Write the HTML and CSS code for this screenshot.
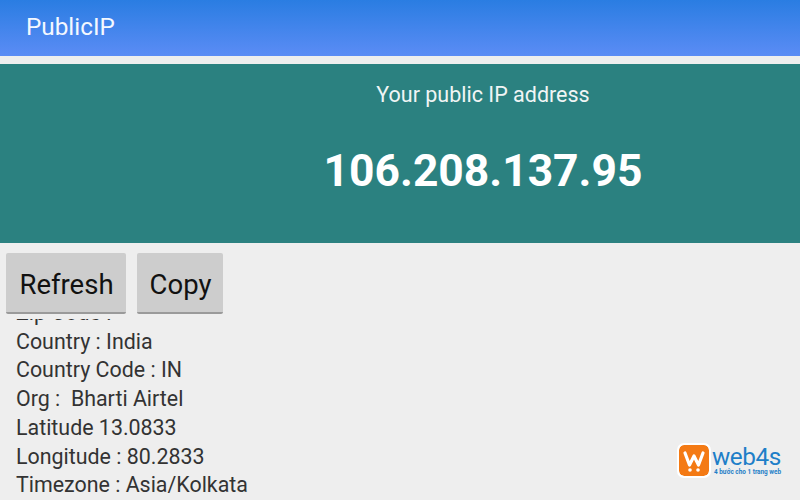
FILE: index.html
```html
<!DOCTYPE html>
<html lang="en">
<head>
<meta charset="utf-8">
<title>PublicIP</title>
<link rel="stylesheet" href="styles.css">
</head>
<body>
<header class="appbar">PublicIP</header>
<section class="hero">
  <p class="hero-label">Your public IP address</p>
  <p class="hero-ip">106.208.137.95</p>
</section>
<div class="actions">
  <button class="btn btn-refresh">Refresh</button>
  <button class="btn btn-copy">Copy</button>
</div>
<div class="details">
  <ul class="details-list">
    <li>Zip Code :</li>
    <li>Country : India</li>
    <li>Country Code : IN</li>
    <li>Org :&nbsp; Bharti Airtel</li>
    <li>Latitude 13.0833</li>
    <li>Longitude : 80.2833</li>
    <li>Timezone : Asia/Kolkata</li>
  </ul>
</div>
<div class="badge">
  <svg class="badge-icon" width="30" height="31" viewBox="0 0 30 31">
    <rect x="0" y="0" width="30" height="31" rx="5" fill="#f47a14"/>
    <path d="M6 8 L10.5 20 L15 11 L19.5 20 L24 8" fill="none" stroke="#fff" stroke-width="3.2" stroke-linejoin="round" stroke-linecap="round"/>
    <circle cx="11" cy="25" r="1.8" fill="#fff"/>
    <circle cx="19" cy="25" r="1.8" fill="#fff"/>
  </svg>
  <div class="badge-text">
    <span class="badge-name">web4s</span>
    <span class="badge-tag">4 bước cho 1 trang web</span>
  </div>
</div>
</body>
</html>
```
FILE: styles.css
```css
* { box-sizing: border-box; }
html, body { margin: 0; padding: 0; }
body {
  width: 800px;
  height: 500px;
  overflow: hidden;
  position: relative;
  background: #eeeeee;
  font-family: Roboto, "Liberation Sans", sans-serif;
  display: flex;
  flex-direction: column;
}
.appbar {
  height: 56px;
  flex: none;
  padding: 12px 0 0 26px;
  font-size: 24.3px;
  line-height: 30px;
  color: #f4f8ff;
  background: linear-gradient(#2a7de2, #5b8cf5);
}
.hero {
  flex: none;
  height: 179px;
  margin-top: 8px;
  background: #2b8180;
  color: #fff;
  text-align: center;
  padding: 17px 0 0 166px;
}
.hero-label {
  margin: 0;
  font-size: 21.5px;
  line-height: 28px;
  color: #f0f5f5;
}
.hero-ip {
  margin: 35px 0 0;
  font-size: 44.4px;
  line-height: 54px;
  font-weight: 700;
}
.actions {
  flex: none;
  display: flex;
  gap: 11px;
  padding: 10px 0 0 6px;
}
.btn {
  height: 61px;
  padding: 3px 0 0 1px;
  border: 0;
  border-bottom: 2px solid #9a9a9a;
  border-radius: 2px;
  background: #cdcdcd;
  color: #111;
  font-family: inherit;
  font-size: 27.5px;
}
.btn-refresh { width: 120px; }
.btn-copy { width: 86px; }
.details {
  flex: 1;
  min-height: 0;
  margin-top: 5px;
  overflow: hidden;
}
.details-list {
  list-style: none;
  margin: -20px 0 0;
  padding: 0 0 0 16px;
  font-size: 21.4px;
  line-height: 28.7px;
  color: #333;
}
.badge {
  position: absolute;
  left: 679px;
  top: 445px;
  display: flex;
  gap: 3px;
  align-items: flex-start;
}
.badge-icon {
  outline: 2px solid #fff;
  border-radius: 5px;
}
.badge-text {
  display: flex;
  flex-direction: column;
  width: 68px;
}
.badge-name {
  font-size: 24.3px;
  line-height: 23px;
  letter-spacing: -0.4px;
  color: #1e7fc8;
}
.badge-tag {
  font-size: 6.4px;
  line-height: 8px;
  font-weight: 700;
  padding-left: 2px;
  color: #1e7fc8;
  white-space: nowrap;
}
```
